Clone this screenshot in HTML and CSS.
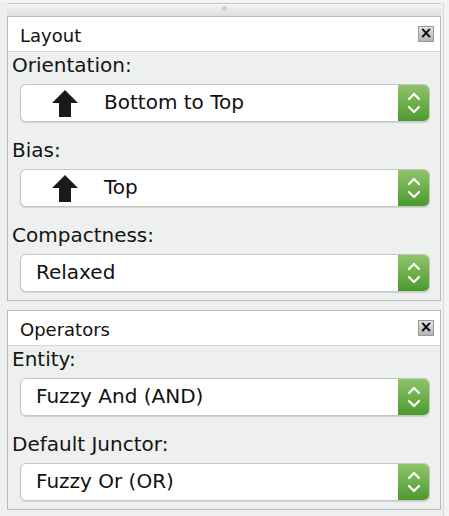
FILE: index.html
```html
<!DOCTYPE html>
<html>
<head>
<meta charset="utf-8">
<link rel="stylesheet" href="styles.css">
</head>
<body>
<div class="app">
  <div class="splitter"><span class="grip"></span></div>

  <section class="panel">
    <header class="panel-head">
      <span class="panel-title">Layout</span>
      <span class="close">×</span>
    </header>
    <div class="panel-body">
      <div class="field">
        <div class="label">Orientation:</div>
        <div class="combo">
          <div class="combo-value with-icon">
            <svg class="arrow" width="26" height="27" viewBox="0 0 26 27"><path d="M13 0 L26 13 L19 13 L19 27 L7 27 L7 13 L0 13 Z" fill="#1a1a1a"/></svg>
            <span>Bottom to Top</span>
          </div>
          <div class="combo-btn"><svg width="16" height="26" viewBox="0 0 16 26"><path d="M3 9 L8 4 L13 9 M3 17 L8 22 L13 17" fill="none" stroke="#fff" stroke-width="2.2" stroke-linecap="round" stroke-linejoin="round"/></svg></div>
        </div>
      </div>
      <div class="field">
        <div class="label">Bias:</div>
        <div class="combo">
          <div class="combo-value with-icon">
            <svg class="arrow" width="26" height="27" viewBox="0 0 26 27"><path d="M13 0 L26 13 L19 13 L19 27 L7 27 L7 13 L0 13 Z" fill="#1a1a1a"/></svg>
            <span>Top</span>
          </div>
          <div class="combo-btn"><svg width="16" height="26" viewBox="0 0 16 26"><path d="M3 9 L8 4 L13 9 M3 17 L8 22 L13 17" fill="none" stroke="#fff" stroke-width="2.2" stroke-linecap="round" stroke-linejoin="round"/></svg></div>
        </div>
      </div>
      <div class="field">
        <div class="label">Compactness:</div>
        <div class="combo">
          <div class="combo-value">Relaxed</div>
          <div class="combo-btn"><svg width="16" height="26" viewBox="0 0 16 26"><path d="M3 9 L8 4 L13 9 M3 17 L8 22 L13 17" fill="none" stroke="#fff" stroke-width="2.2" stroke-linecap="round" stroke-linejoin="round"/></svg></div>
        </div>
      </div>
    </div>
  </section>

  <section class="panel second">
    <header class="panel-head">
      <span class="panel-title">Operators</span>
      <span class="close">×</span>
    </header>
    <div class="panel-body">
      <div class="field">
        <div class="label">Entity:</div>
        <div class="combo">
          <div class="combo-value">Fuzzy And (AND)</div>
          <div class="combo-btn"><svg width="16" height="26" viewBox="0 0 16 26"><path d="M3 9 L8 4 L13 9 M3 17 L8 22 L13 17" fill="none" stroke="#fff" stroke-width="2.2" stroke-linecap="round" stroke-linejoin="round"/></svg></div>
        </div>
      </div>
      <div class="field">
        <div class="label">Default Junctor:</div>
        <div class="combo">
          <div class="combo-value">Fuzzy Or (OR)</div>
          <div class="combo-btn"><svg width="16" height="26" viewBox="0 0 16 26"><path d="M3 9 L8 4 L13 9 M3 17 L8 22 L13 17" fill="none" stroke="#fff" stroke-width="2.2" stroke-linecap="round" stroke-linejoin="round"/></svg></div>
        </div>
      </div>
    </div>
  </section>
</div>
</body>
</html>
```
FILE: styles.css
```css
html, body {
  margin: 0;
  padding: 0;
  background: #f3f3f3;
}
body {
  font-family: "DejaVu Sans", "Liberation Sans", sans-serif;
  color: #111;
  width: 449px;
  height: 516px;
  overflow: hidden;
}
.app {
  padding: 0 2px 0 7px;
  border-right: 1px solid #d8d8d8;
  width: 444px;
  box-sizing: border-box;
  height: 516px;
  background: #eeefef;
}
.splitter {
  height: 12px;
  margin-top: 3px;
  border-top: 1px solid #c9c9c9;
  background: linear-gradient(#f4f4f4, #dedede);
  display: flex;
  justify-content: center;
  align-items: center;
}
.grip {
  width: 5px;
  height: 5px;
  border-radius: 50%;
  background: #cfcfcf;
  margin-top: -4px;
}
.panel {
  border: 1px solid #b9b9b9;
  background: #eeefef;
}
.panel.second {
  margin-top: 9px;
}
.panel-head {
  height: 34px;
  background: #fff;
  border-bottom: 1px solid #d6d6d6;
  display: flex;
  align-items: center;
  justify-content: space-between;
  padding: 0 6px 0 12px;
}
.panel-title {
  font-size: 18px;
  margin-top: 2px;
}
.close {
  width: 14px;
  height: 14px;
  background: linear-gradient(#e2e2e2, #b4b4b4);
  border: 1px solid #9a9a9a;
  font-size: 15px;
  font-weight: bold;
  line-height: 13px;
  text-align: center;
  color: #000;
}
.panel-body {
  padding: 0 10px 8px 4px;
}
.field + .field {
  margin-top: 15px;
}
.label {
  height: 32px;
  line-height: 27px;
  font-size: 20px;
  color: #141414;
}
.combo {
  margin-left: 8px;
  height: 38px;
  display: flex;
  border: 1px solid #c6c6c6;
  border-radius: 6px;
  box-sizing: border-box;
  background: #fff;
  box-shadow: 0 1px 1px rgba(0,0,0,0.12);
  overflow: hidden;
}
.combo-value {
  flex: 1;
  display: flex;
  align-items: center;
  padding-left: 15px;
  padding-bottom: 2px;
  font-size: 20px;
  color: #111;
}
.combo-value.with-icon {
  padding-left: 31px;
  padding-bottom: 0;
}
.combo-value.with-icon span {
  margin-top: -2px;
}
.arrow {
  margin-right: 26px;
}
.combo-btn {
  width: 31px;
  background: linear-gradient(#8fc46a, #4b9a2f);
  display: flex;
  align-items: center;
  justify-content: center;
}
```
